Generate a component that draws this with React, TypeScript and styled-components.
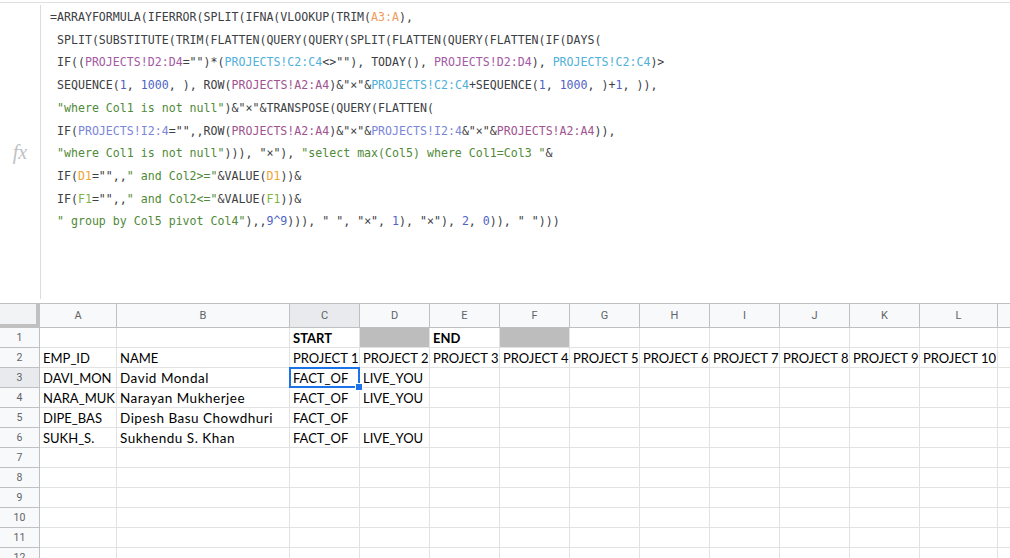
import React from 'react';
import styled, { createGlobalStyle } from 'styled-components';

const GlobalStyle = createGlobalStyle`
  html, body {
    margin: 0;
    padding: 0;
    background: #ffffff;
    overflow: hidden;
  }
`;

// Formula bar
const Page = styled.div`
  width: 1010px;
  height: 558px;
  overflow: hidden;
  padding-top: 2px;
  box-sizing: border-box;
`;

const FormulaBar = styled.div`
  display: flex;
  height: 296px;
  border-top: 1px solid #e0e0e0;
`;

const FxCell = styled.div`
  width: 40px;
  flex-shrink: 0;
  margin-top: 2px;
  border-right: 1px solid #dadce0;
  display: flex;
  align-items: center;
  justify-content: center;
  font-family: 'Liberation Serif', 'DejaVu Serif', serif;
  font-style: italic;
  font-size: 20px;
  color: #bdc1c6;
`;

const FormulaText = styled.div`
  padding: 3px 0 0 9px;
  font-family: 'DejaVu Sans Mono', 'Liberation Mono', monospace;
  font-size: 11.6px;
  line-height: 22.7px;
  color: #3c4043;
`;

const FormulaLine = styled.div`
  white-space: pre;
`;

const Token = styled.span<{ $c: string }>`
  color: ${(p) => p.$c};
`;

const colors: Record<string, string> = {
  d: '#3c4043',
  o: '#f09b5c',
  p: '#a35aa4',
  b: '#4fb0d9',
  n: '#4f63c6',
  s: '#4f8a38',
  m: '#a0538f',
  v: '#7b86d8',
  y: '#efa534',
  g: '#7fb544',
};

const formula: [string, string][][] = [
  [['=ARRAYFORMULA(IFERROR(SPLIT(IFNA(VLOOKUP(TRIM(', 'd'], ['A3:A', 'o'], ['),', 'd']],
  [[' SPLIT(SUBSTITUTE(TRIM(FLATTEN(QUERY(QUERY(SPLIT(FLATTEN(QUERY(FLATTEN(IF(DAYS(', 'd']],
  [
    [' IF((', 'd'], ['PROJECTS!D2:D4', 'p'], ['="")*(', 'd'], ['PROJECTS!C2:C4', 'b'],
    ['<>""), TODAY(), ', 'd'], ['PROJECTS!D2:D4', 'p'], ['), ', 'd'], ['PROJECTS!C2:C4', 'b'], [')>', 'd'],
  ],
  [
    [' SEQUENCE(', 'd'], ['1', 'n'], [', ', 'd'], ['1000', 'n'], [', ), ROW(', 'd'], ['PROJECTS!A2:A4', 'm'],
    [')&"×"&', 'd'], ['PROJECTS!C2:C4', 'b'], ['+SEQUENCE(', 'd'], ['1', 'n'], [', ', 'd'], ['1000', 'n'],
    [', )+', 'd'], ['1', 'n'], [', )),', 'd'],
  ],
  [[' ', 'd'], ['"where Col1 is not null"', 's'], [')&"×"&TRANSPOSE(QUERY(FLATTEN(', 'd']],
  [
    [' IF(', 'd'], ['PROJECTS!I2:4', 'v'], ['="",,ROW(', 'd'], ['PROJECTS!A2:A4', 'm'], [')&"×"&', 'd'],
    ['PROJECTS!I2:4', 'v'], ['&"×"&', 'd'], ['PROJECTS!A2:A4', 'm'], [')),', 'd'],
  ],
  [
    [' ', 'd'], ['"where Col1 is not null"', 's'], ['))), "×"), ', 'd'],
    ['"select max(Col5) where Col1=Col3 "', 's'], ['&', 'd'],
  ],
  [[' IF(', 'd'], ['D1', 'y'], ['="",,', 'd'], ['" and Col2>="', 's'], ['&VALUE(', 'd'], ['D1', 'y'], ['))&', 'd']],
  [[' IF(', 'd'], ['F1', 'g'], ['="",,', 'd'], ['" and Col2<="', 's'], ['&VALUE(', 'd'], ['F1', 'g'], ['))&', 'd']],
  [
    [' ', 'd'], ['" group by Col5 pivot Col4"', 's'], ['),,', 'd'], ['9^9', 'n'], ['))), " ", "×", ', 'd'],
    ['1', 'n'], ['), "×"), ', 'd'], ['2', 'n'], [', ', 'd'], ['0', 'n'], [')), " ")))', 'd'],
  ],
];

// Sheet grid
const Sheet = styled.div`
  margin-top: 4px;
  display: grid;
  grid-template-columns: 40px 77px 173px repeat(9, 70px) 78px 100px;
  grid-template-rows: 24px;
  grid-auto-rows: 20px;
  border-top: 1px solid #c0c0c0;
`;

const Corner = styled.div`
  background: #f1f3f4;
  border-right: 4px solid #c0c0c0;
  border-bottom: 4px solid #c0c0c0;
  box-sizing: border-box;
`;

const ColHead = styled.div<{ $active?: boolean }>`
  background: ${(p) => (p.$active ? '#e8eaed' : '#f8f9fa')};
  border-right: 1px solid #c0c0c0;
  border-bottom: 1px solid #c0c0c0;
  box-sizing: border-box;
  display: flex;
  align-items: center;
  justify-content: center;
  font-family: Roboto, 'Liberation Sans', sans-serif;
  font-size: 11px;
  color: #5f6368;
`;

const RowHead = styled.div<{ $active?: boolean }>`
  background: ${(p) => (p.$active ? '#e8eaed' : '#f8f9fa')};
  border-right: 1px solid #c0c0c0;
  border-bottom: 1px solid #c0c0c0;
  box-sizing: border-box;
  display: flex;
  align-items: center;
  justify-content: center;
  font-family: Roboto, 'Liberation Sans', sans-serif;
  font-size: 10.5px;
  color: #5f6368;
`;

const Cell = styled.div<{ $bold?: boolean; $fill?: boolean; $selected?: boolean; $caps?: boolean }>`
  position: relative;
  background: ${(p) => (p.$fill ? '#bdbdbd' : '#ffffff')};
  border-right: 1px solid #e2e2e2;
  border-bottom: 1px solid #e2e2e2;
  box-sizing: border-box;
  display: flex;
  align-items: center;
  padding: 0 3px;
  overflow: ${(p) => (p.$selected ? 'visible' : 'hidden')};
  white-space: nowrap;
  font-family: Lato, 'Open Sans', sans-serif;
  font-size: ${(p) => (p.$caps ? '13px' : '13.5px')};
  letter-spacing: ${(p) => (p.$caps ? '0' : '0.5px')};
  font-weight: ${(p) => (p.$bold ? 700 : 400)};
  color: #000000;

  ${(p) =>
    p.$selected &&
    `
    z-index: 2;
    &::after {
      content: '';
      position: absolute;
      left: -1px;
      top: -1px;
      right: -1px;
      bottom: -1px;
      border: 2px solid #1a73e8;
    }
    &::before {
      content: '';
      position: absolute;
      right: -4px;
      bottom: -4px;
      width: 6px;
      height: 6px;
      background: #1a73e8;
      border: 1px solid #ffffff;
      z-index: 3;
    }
  `}
`;

const columns = ['A', 'B', 'C', 'D', 'E', 'F', 'G', 'H', 'I', 'J', 'K', 'L', ''];

const data: string[][] = [
  ['', '', 'START', '', 'END'],
  ['EMP_ID', 'NAME', 'PROJECT 1', 'PROJECT 2', 'PROJECT 3', 'PROJECT 4', 'PROJECT 5', 'PROJECT 6', 'PROJECT 7', 'PROJECT 8', 'PROJECT 9', 'PROJECT 10'],
  ['DAVI_MON', 'David Mondal', 'FACT_OF', 'LIVE_YOU'],
  ['NARA_MUK', 'Narayan Mukherjee', 'FACT_OF', 'LIVE_YOU'],
  ['DIPE_BAS', 'Dipesh Basu Chowdhuri', 'FACT_OF'],
  ['SUKH_S.', 'Sukhendu S. Khan', 'FACT_OF', 'LIVE_YOU'],
  [], [], [], [], [], [],
];

const App: React.FC = () => {
  return (
    <Page>
      <GlobalStyle />
      <FormulaBar>
        <FxCell>fx</FxCell>
        <FormulaText>
          {formula.map((line, i) => (
            <FormulaLine key={i}>
              {line.map(([text, c], j) => (
                <Token key={j} $c={colors[c]}>
                  {text}
                </Token>
              ))}
            </FormulaLine>
          ))}
        </FormulaText>
      </FormulaBar>

      <Sheet>
        <Corner />
        {columns.map((col, i) => (
          <ColHead key={i} $active={col === 'C'}>
            {col}
          </ColHead>
        ))}
        {data.map((row, r) => (
          <React.Fragment key={r}>
            <RowHead $active={r === 2}>{r + 1}</RowHead>
            {columns.map((_, c) => {
              const text = row[c] || '';
              return (
                <Cell
                  key={c}
                  $bold={r === 0}
                  $fill={r === 0 && (c === 3 || c === 5)}
                  $selected={r === 2 && c === 2}
                  $caps={text === text.toUpperCase()}
                >
                  {text}
                </Cell>
              );
            })}
          </React.Fragment>
        ))}
      </Sheet>
    </Page>
  );
};

export default App;
